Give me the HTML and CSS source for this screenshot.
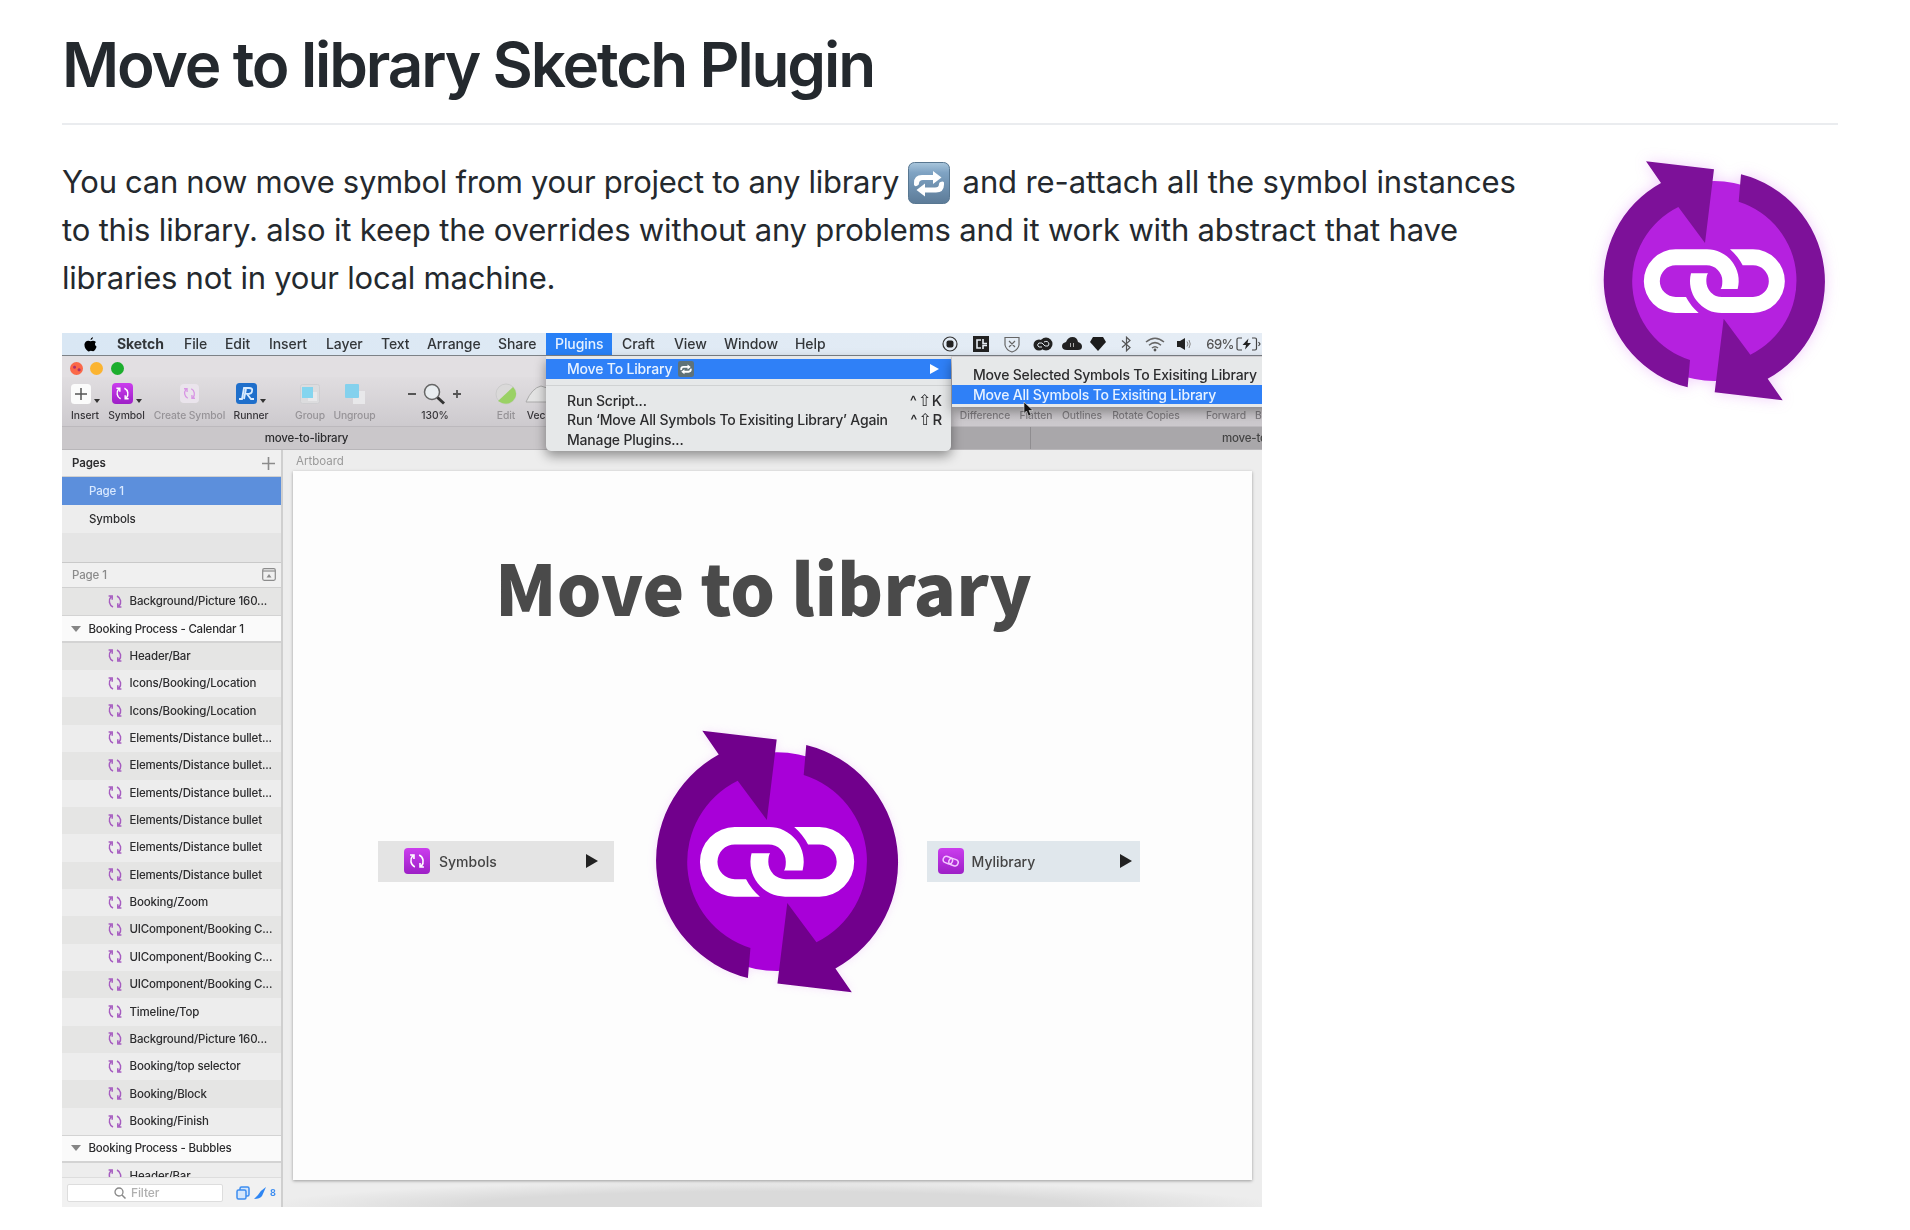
FILE: index.html
```
<!DOCTYPE html>
<html lang="en">
<head>
<meta charset="utf-8">
<title>Move to library Sketch Plugin</title>
<link rel="stylesheet" href="styles.css">
</head>
<body>
<svg class="defs" width="0" height="0" aria-hidden="true">
  <symbol id="logo" viewBox="120 50 690 740">
    <circle class="logo-disc" cx="463" cy="422" r="300"/>
    <g class="logo-ring">
      <path id="arrow" d="M258 63 462 87 435 308 355 200A248 248 0 0 0 390 659L383 741A332 332 0 0 1 303 128Z"/>
      <use href="#arrow" transform="rotate(180 463 421.5)"/>
    </g>
    <g fill="#fff">
      <path id="link" d="M347 327H440A95 95 0 0 1 533 446H482Q487 440 487 422A47 47 0 0 0 440 375H347A47.500 47.500 0 0 0 347 470H378Q392 497 416 518H347A95.500 95.500 0 0 1 347 327Z"/>
      <use href="#link" transform="rotate(180 463 422.500)"/>
    </g>
  </symbol>
  <symbol id="sync" viewBox="0 0 14 14">
    <g fill="none" stroke="currentColor" stroke-width="1.500">
      <path d="M5 12.500C1 10.500.200 5.500 3 2.200M.600 1.500H4.200V5.200"/>
      <path d="M9 1.500C13 3.500 13.800 8.500 11 11.800M13.400 12.500H9.800V8.800"/>
    </g>
  </symbol>
  <symbol id="repeat" viewBox="0 0 42 42">
    <path id="rep" d="M6 23V21Q6 13 14 13H25V9L33.500 15.500 25 22V18H15Q11 18 11 21.500 11 23 9.500 23.500 7 25 6 23Z"/>
    <use href="#rep" transform="rotate(180 21 21.800)"/>
  </symbol>
</svg>

<main class="readme">
  <h1>Move to library Sketch Plugin</h1>
  <div class="columns">
    <div class="body">
      <p class="intro"><span class="l1a">You can now move symbol from your project to any library</span> <svg class="emoji" viewBox="0 0 42 42"><defs><linearGradient id="eg" x2="0" y2="1"><stop stop-color="#a9c6dc"/><stop offset=".25" stop-color="#7fa3c3"/><stop offset="1" stop-color="#5c7b98"/></linearGradient></defs><rect x=".500" y=".500" width="41" height="41" rx="6" fill="url(#eg)" stroke="#587791"/><use href="#repeat" fill="#fff"/></svg> <span class="l1b">and re-attach all the symbol instances</span><br><span class="l2">to this library. also it keep the overrides without any problems and it work with abstract that have</span><br><span class="l3">libraries not in your local machine.</span></p>

      <div class="shot">
        <div class="menubar">
          <svg class="apple" width="13" height="15" viewBox="0 0 13 15"><path d="M9 0Q9 2.600 6.500 3.300 6.300 1 9 0ZM6.600 4.300Q9.500 2.800 12 5 9.600 7 12.600 9.800 11 14 9.200 14.300 8 14 6.700 13.700 5.500 14.200 4.300 14.400.500 12 .400 7.500 1 3.600 4.500 3.700Z"/></svg>
          <b>Sketch</b><span>File</span><span>Edit</span><span>Insert</span><span>Layer</span><span>Text</span><span>Arrange</span><span>Share</span><span class="open">Plugins</span><span>Craft</span><span>View</span><span>Window</span><span>Help</span>
          <div class="status">
            <svg width="16" height="16" viewBox="0 0 16 16"><circle cx="8" cy="8" r="7" fill="none" stroke="#333" stroke-width="1.200"/><rect x="4.500" y="4.500" width="7" height="7" rx="2" fill="#222"/></svg>
            <svg width="16" height="16" viewBox="0 0 16 16"><path fill="#222" d="M0 0H16V16H0Z"/><path d="M8 4H4V12H8M10 3V7.500H14M10 13V9.500H14" stroke="#e8eef5" stroke-width="1.600" fill="none"/></svg>
            <svg width="16" height="17" viewBox="0 0 16 17"><path d="M1 1.500H15V9Q14 14 8 16 2 14 1 9ZM5 5 11 11M11 5 5 11" stroke="#666" stroke-width="1.200" fill="none"/></svg>
            <svg width="20" height="14" viewBox="0 0 20 14"><circle cx="6" cy="8" r="5.500" fill="#222"/><circle cx="13" cy="7" r="6.500" fill="#222"/><path d="M9 10Q5 11 4.500 8 5 5 9 6L12 9Q16 10 16 7 15 3 11 5" stroke="#dfe6ec" fill="none"/></svg>
            <svg width="20" height="14" viewBox="0 0 20 14"><path fill="#222" d="M5 13Q0 13 0 9 0 6 4 5 6 0 10.500 0 15 0 16 5 20 6 20 9.500 20 13 16 13Z"/><path d="M8.500 6V10M11.500 6V10" stroke="#aaa"/></svg>
            <svg width="16" height="14" viewBox="0 0 16 14"><path fill="#1c1c1c" d="M3 0H13L16 5 8 14 0 5Z"/></svg>
            <svg width="11" height="16" viewBox="0 0 11 16"><path d="M1 4.500 9 11.500 5.500 14.800V1.200L9 4.500 1 11.500" stroke="#555" stroke-width="1.200" fill="none"/></svg>
            <svg width="20" height="15" viewBox="0 0 20 15"><g fill="none" stroke="#666" stroke-width="1.500"><path d="M1 5Q10-2.500 19 5M4 8.200Q10 3 16 8.200M7 11Q10 8.400 13 11"/></g><circle cx="10" cy="13" r="1.400" fill="#555"/></svg>
            <svg width="14" height="12" viewBox="0 0 14 12"><path fill="#222" d="M0 3H3L8 0V12L3 9H0Z"/><path d="M10 3.500Q12 6 10 8.500M12 2Q14.500 6 12 10" stroke="#888" fill="none"/></svg>
            <span>69%</span>
            <svg width="25" height="14" viewBox="0 0 25 14"><path d="M6 1H2.500Q1 1 1 2.500V11.500Q1 13 2.500 13H6M16 1H19Q20.500 1 20.500 2.500V11.500Q20.500 13 19 13H16M22.500 5 24 7 22.500 9" stroke="#444" stroke-width="1.200" fill="none"/><path d="M12.500 1.500 6.500 8H10L9 12.500 15 6H11.500Z" fill="#222"/></svg>
          </div>
        </div>

        <div class="window">
          <div class="lights"><i class="red"></i><i class="amber"></i><i class="green"></i></div>
          <div class="tools">
            <div class="tool t-insert"><div class="ic"><svg width="20" height="20" viewBox="0 0 20 20"><rect width="20" height="20" rx="3.500" fill="#fbfbfb"/><path d="M10 4V16M4 10H16" stroke="#555" stroke-width="1.500"/></svg><i class="caret"></i></div>Insert</div>
            <div class="tool t-symbol"><div class="ic"><svg class="badge" width="21" height="21" viewBox="-4 -4 22 22"><use href="#sync" width="14" height="14"/></svg><i class="caret"></i></div>Symbol</div>
            <div class="tool t-create dim"><div class="ic"><svg class="badge pale" width="19" height="19" viewBox="-4 -4 22 22"><use href="#sync" width="14" height="14"/></svg></div>Create Symbol</div>
            <div class="tool t-runner"><div class="ic"><svg width="21" height="21" viewBox="0 0 21 21"><rect width="21" height="21" rx="3.500" fill="#1f6fcb"/><path d="M3 16H6L8 5H13Q17 5 16 8 16 11 11 11L15 16H18M10 6 8 16" stroke="#d9ecff" stroke-width="1.800" fill="none"/></svg><i class="caret"></i></div>Runner</div>
            <div class="tool t-group dim"><div class="ic"><svg width="20" height="20" viewBox="0 0 20 20"><rect x=".500" y=".500" width="19" height="19" rx="2" fill="#dcdcde" stroke="#cfcfd2"/><path d="M8 8H17V17H8Z" fill="#e8e8ea"/><rect x="2" y="3" width="11" height="11" fill="#84d5ef"/></svg></div>Group</div>
            <div class="tool t-ungroup dim"><div class="ic"><svg width="20" height="20" viewBox="0 0 20 20"><path d="M8 7H20V20H8Z" fill="#e8e8ea"/><rect width="14" height="14" rx="1" fill="#84d1ed"/></svg></div>Ungroup</div>
            <div class="tool t-zoom"><div class="ic"><svg width="54" height="22" viewBox="0 0 54 22"><path d="M0 11H8M45 11H53M49 7V15" stroke="#555" stroke-width="1.800"/><circle cx="24" cy="9" r="7.500" fill="#e9edf0" stroke="#666" stroke-width="1.500"/><path d="M29.500 14.500 36 20.500" stroke="#333" stroke-width="3"/></svg></div>130%</div>
            <div class="tool t-edit dim"><div class="ic"><svg width="22" height="22" viewBox="0 0 22 22"><circle cx="11" cy="11" r="10" fill="#dad9d9" stroke="#cbcbcb"/><path d="M3 18 18 4Q23 9 20 15 15 23 7 20Z" fill="#9ad165"/></svg></div>Edit</div>
            <div class="tool t-vec"><div class="ic"><svg width="22" height="20" viewBox="0 0 22 20"><path d="M1 18Q7 4 16 2L22 4V18Z" fill="#e3e3e3" stroke="#aaa"/></svg></div>Vec</div>
            <div class="tool t-diff dim"><div class="ic"></div>Difference</div>
            <div class="tool t-flat dim"><div class="ic"></div>Flatten</div>
            <div class="tool t-out dim"><div class="ic"></div>Outlines</div>
            <div class="tool t-rot dim"><div class="ic"></div>Rotate Copies</div>
            <div class="tool t-fwd dim"><div class="ic"></div>Forward</div>
            <div class="tool t-back dim"><div class="ic"></div>B</div>
          </div>
          <div class="tabs"><div class="tab active">move-to-library</div><div class="tab"></div><div class="tab last">move-to</div></div>

          <div class="work">
            <aside class="sidebar">
              <div class="head">Pages<svg width="13" height="13" viewBox="0 0 13 13"><path d="M6.500 0V13M0 6.500H13" stroke="#8b8b8b" stroke-width="1.600"/></svg></div>
              <div class="page selected">Page 1</div>
              <div class="page">Symbols</div>
              <div class="blank"></div>
              <div class="head sub">Page 1<svg width="14" height="13" viewBox="0 0 14 13"><rect x=".700" y=".700" width="12.600" height="11.600" rx="1.500" fill="none" stroke="#8c8c8c" stroke-width="1.200"/><path d="M1 3H13" stroke="#8c8c8c" stroke-width="1.200"/><path d="M4.500 9.500 7 6 9.500 9.500Z" fill="#8c8c8c"/></svg></div>
              <div class="layers">
                <div class="layer"><svg><use href="#sync"/></svg>Background/Picture 160...</div>
                <div class="layer group"><i></i>Booking Process - Calendar 1</div>
                <div class="layer"><svg><use href="#sync"/></svg>Header/Bar</div>
                <div class="layer"><svg><use href="#sync"/></svg>Icons/Booking/Location</div>
                <div class="layer"><svg><use href="#sync"/></svg>Icons/Booking/Location</div>
                <div class="layer"><svg><use href="#sync"/></svg>Elements/Distance bullet...</div>
                <div class="layer"><svg><use href="#sync"/></svg>Elements/Distance bullet...</div>
                <div class="layer"><svg><use href="#sync"/></svg>Elements/Distance bullet...</div>
                <div class="layer"><svg><use href="#sync"/></svg>Elements/Distance bullet</div>
                <div class="layer"><svg><use href="#sync"/></svg>Elements/Distance bullet</div>
                <div class="layer"><svg><use href="#sync"/></svg>Elements/Distance bullet</div>
                <div class="layer"><svg><use href="#sync"/></svg>Booking/Zoom</div>
                <div class="layer"><svg><use href="#sync"/></svg>UIComponent/Booking C...</div>
                <div class="layer"><svg><use href="#sync"/></svg>UIComponent/Booking C...</div>
                <div class="layer"><svg><use href="#sync"/></svg>UIComponent/Booking C...</div>
                <div class="layer"><svg><use href="#sync"/></svg>Timeline/Top</div>
                <div class="layer"><svg><use href="#sync"/></svg>Background/Picture 160...</div>
                <div class="layer"><svg><use href="#sync"/></svg>Booking/top selector</div>
                <div class="layer"><svg><use href="#sync"/></svg>Booking/Block</div>
                <div class="layer"><svg><use href="#sync"/></svg>Booking/Finish</div>
                <div class="layer group"><i></i>Booking Process - Bubbles</div>
                <div class="layer"><svg><use href="#sync"/></svg>Header/Bar</div>
              </div>
              <div class="filter">
                <div class="field"><svg width="12" height="12" viewBox="0 0 12 12"><circle cx="5" cy="5" r="4" fill="none" stroke="#888" stroke-width="1.300"/><path d="M8 8 11.500 11.500" stroke="#888" stroke-width="1.500"/></svg>Filter</div>
                <svg width="40" height="14" viewBox="0 0 40 14"><g fill="#d4e6fb" stroke="#3d8df0" stroke-width="1.500"><rect x="4" y="1" width="9" height="9" rx="1.500"/><rect x="1" y="4" width="9" height="9" rx="1.500"/></g><path d="M30 1Q25 4 22 9L18 13Q24 13 26 10Z" fill="#2f86f3"/></svg><span class="count">8</span>
              </div>
            </aside>

            <section class="canvas">
              <div class="name">Artboard</div>
              <div class="artboard">
                <h2>Move to library</h2>
                <div class="flow">
                  <div class="chip left"><svg class="badge" width="26" height="26" viewBox="-5 -5 24 24"><use href="#sync" width="14" height="14"/></svg><span>Symbols</span><i></i></div>
                  <svg class="logo big"><use href="#logo"/></svg>
                  <div class="chip right"><svg class="badge" width="26" height="26" viewBox="0 0 26 26"><g fill="none" stroke="#f3c8ff" stroke-width="1.500" transform="rotate(20 13 13)"><rect x="5" y="10" width="9.500" height="6.500" rx="3.200"/><rect x="11" y="10" width="9.500" height="6.500" rx="3.200"/></g></svg><span>Mylibrary</span><i></i></div>
                </div>
              </div>
            </section>
          </div>
        </div>

        <div class="menu plugins">
          <div class="item on"><span>Move To Library</span><svg class="mini" width="16" height="16" viewBox="0 0 42 42"><rect width="42" height="42" rx="6" fill="#5f7278"/><use href="#repeat" fill="#fff"/></svg><i></i></div>
          <hr>
          <div class="item"><span>Run Script...</span><kbd>^<em>⇧</em>K</kbd></div>
          <div class="item"><span>Run ‘Move All Symbols To Exisiting Library’ Again</span><kbd>^<em>⇧</em>R</kbd></div>
          <div class="item"><span>Manage Plugins...</span></div>
        </div>
        <div class="menu submenu">
          <div class="item"><span>Move Selected Symbols To Exisiting Library</span></div>
          <div class="item on"><span>Move All Symbols To Exisiting Library</span></div>
        </div>
        <svg class="cursor" width="11" height="16" viewBox="0 0 11 16"><path d="M1 1V12.500L3.500 10 5.500 15 8 14 6 9.500H10Z" fill="#111" stroke="#ddd" stroke-width=".600"/></svg>
      </div>
    </div>
    <svg class="logo"><use href="#logo"/></svg>
  </div>
</main>
</body>
</html>
```
FILE: styles.css
```
* { box-sizing: border-box; }
body { margin: 0; background: #fff; color: #24292e; font-family: Inter, "Liberation Sans", sans-serif; }
.defs { position: absolute; }
svg { display: block; flex: none; }

.readme { padding: 0 72px 0 62px; height: 1230px; overflow: hidden; }
h1 { margin: 0; height: 125px; padding-top: 25px; border-bottom: 2px solid #eaecef; font-size: 62px; line-height: 80px; font-weight: 600; letter-spacing: -2.120px; white-space: nowrap; }
.columns { display: flex; justify-content: space-between; padding: 32px 8px 0 0; }
.body { width: 1480px; }
.intro { margin: 0 0 31px; padding-top: 1px; height: 145px; font-size: 31px; line-height: 48px; white-space: nowrap; }
.emoji { display: inline-block; width: 42px; height: 42px; vertical-align: -11px; }
.l1a { letter-spacing: -.300px; }
.l1b { margin-left: 4px; letter-spacing: -.120px; }
.l2 { letter-spacing: -.170px; }
.l3 { letter-spacing: -.230px; }

.logo { --disc: #b521df; --ring: #7d1199; width: 230px; height: 246.700px; filter: drop-shadow(0 0 7px rgba(200, 60, 240, .25)); }
.logo.big { --disc: #a800d8; --ring: #71008c; width: 251.600px; height: 269.900px; filter: drop-shadow(0 0 4px rgba(200, 60, 240, .15)); }
.logo-disc { fill: var(--disc); }
.logo-ring { fill: var(--ring); }

/* application screenshot */
.shot { position: relative; width: 1200px; height: 874px; overflow: hidden; background: #ececec; color: #2c2c2e; filter: blur(.6px); }
.menubar { display: grid; grid-template-columns: 33px 67px 41px 44px 57px 55px 46px 71px 48px 66px 52px 50px 71px 60px 1fr; height: 23px; padding-left: 22px; align-items: center; background: linear-gradient(90deg, #d9e7f4, #e6edf5); border-bottom: 1px solid #7d8287; font-size: 14px; font-weight: 500; line-height: 22px; letter-spacing: -.080px; white-space: nowrap; color: #333639; }
.menubar b { font-weight: 700; }
.menubar .open { background: #2880f6; color: #e6f1ff; padding-left: 9px; }
.menubar .open ~ span { padding-left: 10px; }
.status { display: grid; grid-template-columns: 30px 31px 31px 31px 27px 26px 30px 28px 29px 36px auto; padding-left: 90px; font-size: 13px; letter-spacing: -.5px; align-items: center; justify-content: start; justify-items: center; color: #555; }
.status > span { justify-self: end; }
.status > :last-child { margin-left: 2px; }

.window { height: 851px; display: flex; flex-direction: column; }
.lights { display: flex; gap: 7.500px; padding: 6px 0 0 7.500px; height: 21px; background: #e2dfe2; }
.lights i { width: 13px; height: 13px; border-radius: 50%; }
.red { background: radial-gradient(circle at 35% 40%, #b0306a 1px, transparent 2px), radial-gradient(circle at 70% 60%, #b0306a 1px, transparent 2px), #fb6848; }
.amber { background: #fbb431; }
.green { background: #1cae2d; }
.tools { display: flex; height: 49px; padding: 3px 0 0 5px; background: linear-gradient(#e0dde0, #cdcace); font-size: 10.300px; font-weight: 500; line-height: 17px; letter-spacing: -.080px; white-space: nowrap; }
.tool { display: flex; flex-direction: column; align-items: center; flex: none; color: #38363a; }
.tool.dim { color: #969397; }
.t-back ~ .tool, .t-diff.dim, .t-flat.dim, .t-out.dim, .t-rot.dim, .t-fwd.dim, .t-back.dim { color: #858286; }
.ic { height: 27px; display: flex; align-items: center; gap: 3px; }
.caret { align-self: flex-end; margin-bottom: 4px; border: 3px solid transparent; border-top: 4px solid #333; border-bottom: 0; }
.t-insert { width: 36px; }
.t-symbol { width: 47px; }
.t-create { width: 79px; }
.t-runner { width: 44px; }
.t-group { width: 40px; margin-left: 17px; }
.t-ungroup { width: 49px; }
.t-zoom { width: 70px; margin-left: 21px; }
.t-edit { width: 32px; margin-left: 20px; }
.t-vec { width: 24px; margin-left: 2px; }
.t-diff { width: 60px; margin-left: 407px; }
.t-flat { width: 42px; }
.t-out { width: 48px; margin-left: 1px; }
.t-rot { width: 72px; margin-left: 4px; }
.t-fwd { width: 42px; margin-left: 23px; }
.t-back { margin-left: 8px; }
.badge { border-radius: 4px; background: linear-gradient(#cb3eee, #9d1fc6); color: #fff; }
.badge.pale { background: #eae4ec; color: #d896e4; }
.tabs { display: flex; height: 24px; line-height: 23px; border-bottom: 1px solid #b8b6b9; font-size: 11.500px; letter-spacing: -.200px; font-weight: 500; background: #a9a7aa; border-top: 1px solid #bcb9bd; overflow: hidden; white-space: nowrap; }
.tab { width: 479px; border-right: 1px solid #8f8d90; flex: none; }
.tab.active { width: 490px; background: #cac7ca; text-align: center; }
.tab.last { width: 240px; padding-left: 191px; color: #444; border: 0; }

.work { display: flex; flex: 1; min-height: 0; }
.sidebar { width: 221px; display: flex; flex-direction: column; border-right: 2px solid #cfcfcf; font-size: 11.500px; letter-spacing: -.120px; font-weight: 500; white-space: nowrap; background: #ededed; }
.head { height: 27px; padding: 0 6px 0 10px; display: flex; align-items: center; justify-content: space-between; background: #f0f0f0; font-weight: 600; border-bottom: 1px solid #d0d0d0; flex: none; }
.head.sub { height: 26.500px; border-top: 1px solid #c9c9c9; color: #8a8a8a; font-weight: 500; padding-right: 5px; }
.page { height: 28px; line-height: 28px; padding-left: 27px; flex: none; }
.page.selected { background: #5c8fdc; color: #d9e9ff; }
.blank { height: 28.500px; background: #e5e5e5; flex: none; }
.layers { flex: 1; min-height: 0; overflow: hidden; }
.layer { height: 27.370px; display: flex; align-items: center; gap: 7.500px; padding: 0 0 1px 46px; background: #ededed; letter-spacing: -.170px; }
.layer:nth-child(odd) { background: #e5e5e4; }
.layer svg { width: 14px; height: 15px; color: #a65cc0; }
.layer.group { background: #fafafa; padding-left: 9px; gap: 7.500px; border-top: 1px solid #d3d3d3; border-bottom: 2px solid #d3d3d3; padding-bottom: 0; letter-spacing: -.210px; }
.layer.group i { border: 5.500px solid transparent; border-top: 6px solid #858585; border-bottom: 0; }
.filter { height: 30px; display: flex; align-items: center; padding-left: 5px; background: #f1f1f1; border-top: 1px solid #ddd; flex: none; color: #3d8df0; font-size: 9px; }
.field { width: 156px; height: 18px; display: flex; align-items: center; gap: 5px; padding-left: 46px; margin-right: 13px; background: #fff; border: 1px solid #ddd; border-radius: 2px; color: #b0b0b0; font-size: 12px; }
.count { margin-left: -6px; font-weight: 700; }

.canvas { flex: 1; padding-left: 10px; background: radial-gradient(ellipse 52% 26px at 50% 100%, #dadada 60%, transparent), #ededed; }
.name { height: 21px; line-height: 22px; padding-left: 3px; font-size: 11.500px; color: #999; letter-spacing: 0; }
.artboard { width: 959px; height: 709px; background: #fdfdfd; box-shadow: 0 1px 3px rgba(0, 0, 0, .35); padding-top: 64px; }
h2 { margin: 0 0 0 202px; height: 100px; line-height: 100px; font-family: "Noto Sans CJK JP", "Noto Sans", sans-serif; font-weight: 900; font-size: 70.300px; color: #4a4a4a; white-space: nowrap; }
.flow { display: flex; align-items: center; margin-top: 90.500px; padding-left: 85px; }
.chip { display: flex; align-items: center; height: 41px; margin-top: 2px; font-size: 14px; font-weight: 500; color: #444; }
.chip span { flex: 1; }
.chip i { border: 7px solid transparent; border-left: 12px solid #222; border-right: 0; }
.chip.left { width: 236px; padding: 0 16px 0 26px; gap: 9px; background: #e4e4e4; }
.chip.right { width: 213px; padding: 0 8px 0 11px; gap: 8px; background: #e0e7ec; }
.big { margin: 0 23px 0 38px; }

.menu { position: absolute; background: #e6e8e9; box-shadow: 0 5px 12px rgba(0, 0, 0, .4); font-size: 14px; font-weight: 500; letter-spacing: -.180px; white-space: nowrap; }
.item { display: flex; align-items: center; height: 19.500px; padding-left: 21px; }
.item.on { background: #2f80f7; color: #e8f2ff; }
.plugins { left: 484px; top: 23px; width: 405px; height: 95px; padding-top: 3px; border-radius: 0 0 5px 5px; }
.plugins hr { margin: 6px 0 5px; border: 0; border-top: 1px solid #d0d2d3; }
.mini { margin-left: 6px; }
.plugins .item i { margin: 0 12px 0 auto; border: 5px solid transparent; border-left: 9px solid #fff; border-right: 0; }
kbd { margin-left: auto; padding-right: 9px; font: inherit; font-size: 15px; display: flex; gap: 1px; }
kbd em { font: 16px/19px "DejaVu Sans", sans-serif; }
.submenu { left: 890px; top: 24px; width: 320px; height: 50px; padding-top: 8px; }
.submenu .item { letter-spacing: -.190px; }
.cursor { position: absolute; left: 961px; top: 68px; }
```
